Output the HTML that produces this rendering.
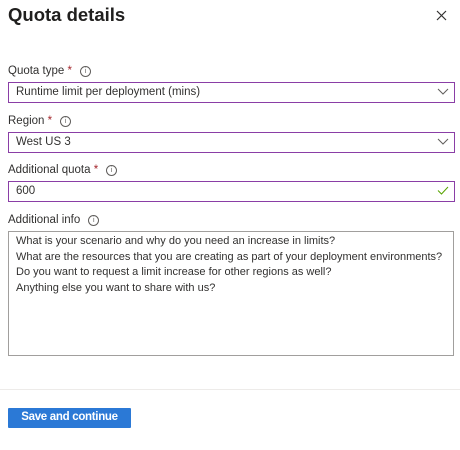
<!DOCTYPE html>
<html><head><style>
body{margin:0;width:460px;height:450px;background:#fff;font-family:"Liberation Sans",sans-serif;color:#323130;position:relative;overflow:hidden}
.a{position:absolute}
.t{left:8px;top:4px;font-size:18.5px;font-weight:600;color:#201f1e}
.lbl{left:8px;font-size:11.5px;color:#323130}
.lbl .s{color:#a4262c}
.i{display:inline-block;width:9px;height:9px;border:1px solid #605e5c;border-radius:50%;font-size:7px;line-height:9px;text-align:center;margin-left:8px;vertical-align:1px;color:#605e5c}
.box{left:8px;height:19px;border:1px solid #8a3ea6;font-size:11.5px;line-height:19px;padding-left:7px;box-sizing:content-box;width:438px}
.ta{left:8px;top:231px;width:437px;height:121px;border:1px solid #a19f9d;font-size:11px;line-height:15.5px;padding:2px 0 0 7px;white-space:nowrap;color:#323130}
.btn{left:8px;top:408px;width:123px;height:20px;background:#2b79d6;color:#fff;font-size:11.5px;line-height:19px;text-align:center;border-radius:1px;font-weight:600;letter-spacing:-0.3px}
</style></head><body>
<div class="a t">Quota details</div>
<svg class="a" style="left:436px;top:10px" width="11" height="11"><path d="M1 1L10 10M10 1L1 10" stroke="#323130" stroke-width="1.2"/></svg>
<div class="a lbl" style="top:65px">Quota type <span class="s">*</span><span class="i">i</span></div>
<div class="a box" style="top:82px">Runtime limit per deployment (mins)</div>
<svg class="a" style="left:437px;top:88px" width="12" height="8"><path d="M1 1L6 6L11 1" fill="none" stroke="#605e5c"/></svg>
<div class="a lbl" style="top:115px">Region <span class="s">*</span><span class="i">i</span></div>
<div class="a box" style="top:132px">West US 3</div>
<svg class="a" style="left:437px;top:138px" width="12" height="8"><path d="M1 1L6 6L11 1" fill="none" stroke="#605e5c"/></svg>
<div class="a lbl" style="top:164px">Additional quota <span class="s">*</span><span class="i">i</span></div>
<div class="a box" style="top:181px">600</div>
<svg class="a" style="left:437px;top:186px" width="12" height="9"><path d="M1 4.5L4.5 8L11 1" fill="none" stroke="#57a300"/></svg>
<div class="a lbl" style="top:214px">Additional info<span class="i">i</span></div>
<div class="a ta">What is your scenario and why do you need an increase in limits?<br>What are the resources that you are creating as part of your deployment environments?<br>Do you want to request a limit increase for other regions as well?<br>Anything else you want to share with us?</div>
<div class="a" style="left:0;top:389px;width:460px;height:1px;background:#edebe9"></div>
<div class="a btn">Save and continue</div>
</body></html>
